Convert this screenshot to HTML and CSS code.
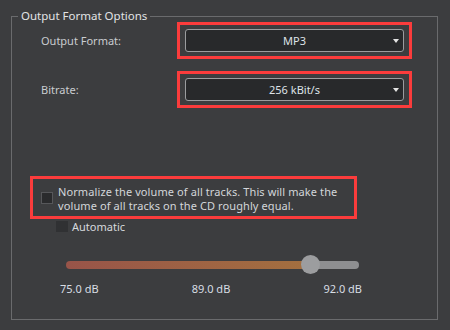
FILE: index.html
```html
<!DOCTYPE html>
<html lang="en">
<head>
    <meta charset="UTF-8">
    <title>Output Format Options</title>
    <link rel="stylesheet" href="styles.css">
</head>
<body>
    <div class="group">
        <div class="group-title">Output Format Options</div>

        <div class="row row-first">
            <span class="label">Output Format:</span>
            <div class="hl">
                <div class="combo">MP3<span class="arrow"></span></div>
            </div>
        </div>

        <div class="row row-second">
            <span class="label">Bitrate:</span>
            <div class="hl">
                <div class="combo">256 kBit/s<span class="arrow"></span></div>
            </div>
        </div>

        <div class="hl hl-check">
            <span class="box"></span>
            <span class="check-text">Normalize the volume of all tracks. This will make the<br>volume of all tracks on the CD roughly equal.</span>
        </div>

        <div class="auto">
            <span class="box box-off"></span>
            <span>Automatic</span>
        </div>

        <div class="slider">
            <div class="track-fill" style="width: 244px"></div>
            <div class="track-rest"></div>
            <div class="thumb"></div>
        </div>

        <div class="ticks">
            <span>75.0 dB</span>
            <span>89.0 dB</span>
            <span>92.0 dB</span>
        </div>
    </div>
</body>
</html>
```

FILE: styles.css
```css
body {
    margin: 0;
    background: #3c3d3f;
    font-family: "Noto Sans", "Open Sans", sans-serif;
    font-size: 11px;
    color: #d6d9dd;
    width: 450px;
    height: 330px;
    overflow: hidden;
}
.group {
    position: relative;
    margin: 16px 12px 0 11px;
    height: 302px;
    border: 1px solid #6a6b6d;
    box-sizing: content-box;
}
.group-title {
    position: absolute;
    top: -9px;
    left: 6px;
    padding: 0 3px;
    background: #3c3d3f;
    line-height: 16px;
    font-size: 11.5px;
    color: #e2e4e6;
}
.row {
    display: flex;
    align-items: center;
    padding-left: 29px;
}
.row-first {
    margin-top: 5px;
}
.row-second {
    margin-top: 12px;
}
.label {
    width: 136px;
    color: #c9ccd0;
    padding-bottom: 1px;
}
.row-first .label {
    padding-bottom: 0;
    margin-top: -1px;
}
.hl {
    border: 3px solid #fb3c3c;
}
.row .hl {
    padding: 4px 5px;
}
.combo {
    position: relative;
    width: 217px;
    height: 21px;
    line-height: 21px;
    text-align: center;
    background: #28292b;
    border: 1px solid #9b9c9e;
    border-radius: 3px;
    color: #dfe3e8;
}
.arrow {
    position: absolute;
    right: 4px;
    top: 9px;
    border-left: 3px solid transparent;
    border-right: 3px solid transparent;
    border-top: 4px solid #e4e4e4;
}
.hl-check {
    display: flex;
    align-items: center;
    margin: 68px 0 0 18px;
    width: 313px;
    height: 37px;
    padding: 0 0 0 8px;
}
.box {
    width: 10px;
    height: 10px;
    border: 1px solid #56575a;
    background: #2a2b2d;
    flex: none;
    margin-right: 5px;
}
.check-text {
    line-height: 14px;
    color: #d3d6da;
    white-space: nowrap;
    padding-top: 2px;
    letter-spacing: 0.1px;
}
.auto {
    display: flex;
    align-items: center;
    margin: 0 0 0 44px;
    height: 14px;
}
.box-off {
    width: 12px;
    height: 11px;
    border: none;
    background: #303133;
    margin-right: 4px;
}
.slider {
    position: relative;
    display: flex;
    margin: 28px 0 0 54px;
    width: 293px;
    height: 8px;
}
.track-fill {
    height: 8px;
    border-radius: 4px 0 0 4px;
    background: linear-gradient(to right, #985449, #a4703f);
}
.track-rest {
    flex: 1;
    height: 8px;
    border-radius: 0 4px 4px 0;
    background: #8e8f91;
}
.thumb {
    position: absolute;
    left: 235px;
    top: -6px;
    width: 19px;
    height: 19px;
    border-radius: 50%;
    background: #9c9d9f;
}
.ticks {
    display: flex;
    justify-content: space-between;
    margin: 13px 0 0 48px;
    width: 302px;
    color: #d8dde4;
    line-height: 14px;
}
```
